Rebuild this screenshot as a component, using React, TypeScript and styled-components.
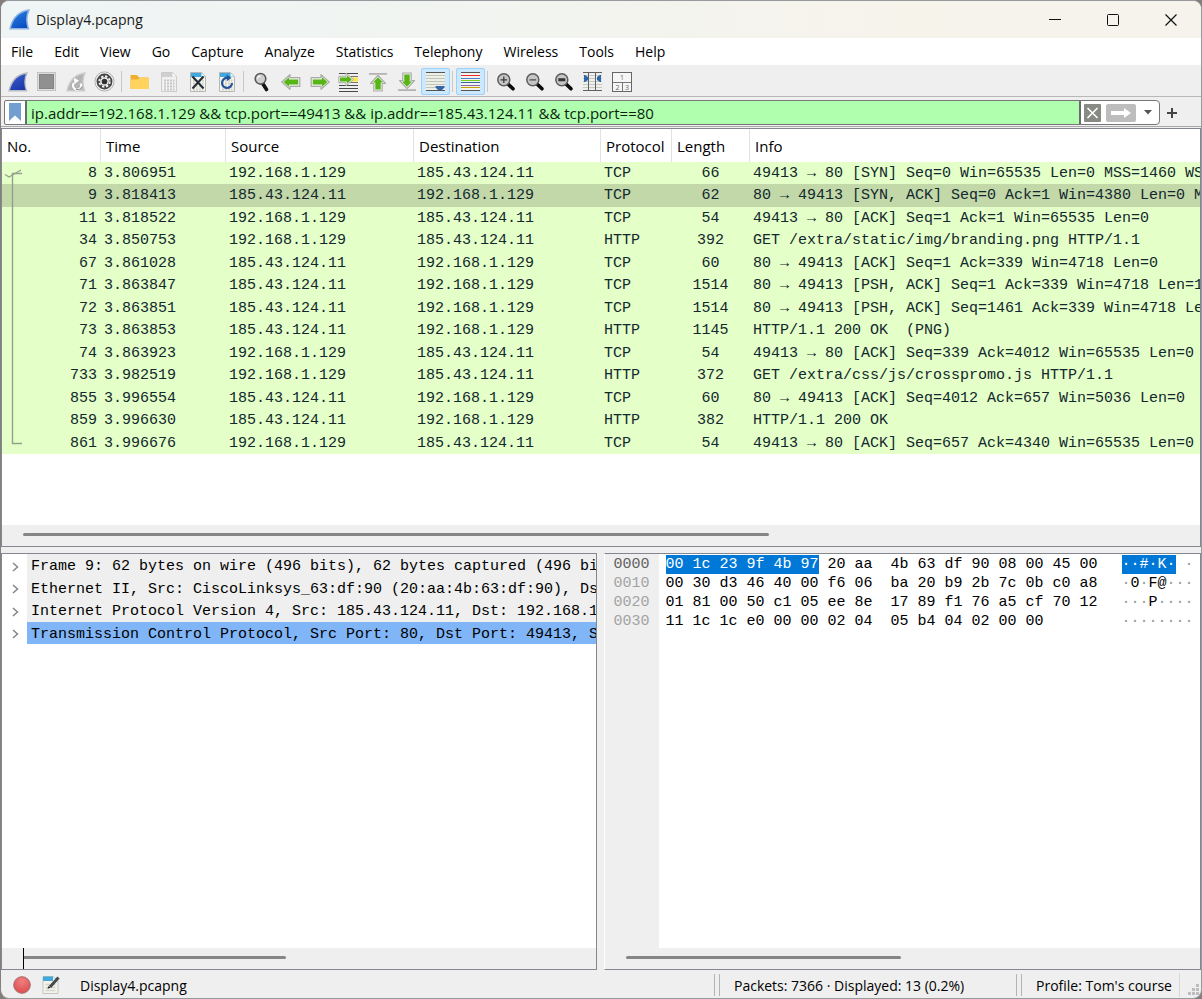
import React, { useState } from 'react';
import styled, { createGlobalStyle, css } from 'styled-components';

const ui = '"Open Sans", "Noto Sans", sans-serif';
const mono = '"Liberation Mono", "DejaVu Sans Mono", monospace';
const chrome = '#efefef';
const frame = '#828790';

const GlobalStyle = createGlobalStyle`
  * { box-sizing: border-box; }
  html, body { margin: 0; padding: 0; background: #857d7a; }
  button, input { font: inherit; color: inherit; margin: 0; }
`;

const Window = styled.div`
  height: 100vh;
  min-height: 600px;
  border: 1px solid #969a9f;
  border-left-color: #857f7e;
  border-radius: 9px;
  overflow: hidden;
  display: flex;
  flex-direction: column;
  background: ${chrome};
  color: #000;
  font: 14px/20px ${ui};
`;

const TitleBar = styled.header`
  flex: none;
  height: 37px;
  padding: 0 1px 0 8px;
  display: flex;
  align-items: center;
  gap: 6px;
  background: linear-gradient(90deg, #eff4f5 0%, #f1f4f0 40%, #f6f3eb 75%, #f5f3eb 100%);
`;

const Title = styled.h1`
  flex: 1;
  margin: 0;
  font: inherit;
  color: #1a1a1a;
`;

const CaptionButtons = styled.div`
  display: flex;
`;

const CaptionButton = styled.button`
  width: 58px;
  height: 37px;
  padding: 0;
  border: 0;
  background: transparent;
  display: flex;
  align-items: center;
  justify-content: center;
`;

const MenuBar = styled.nav`
  flex: none;
  height: 27px;
  display: flex;
  gap: 1px;
  background: #fff;
`;

const MenuItem = styled.button`
  padding: 0 10px;
  border: 0;
  background: transparent;
  line-height: 27px;
  &:hover { background: #e5f3ff; }
`;

const ToolBar = styled.div`
  flex: none;
  height: 32px;
  padding: 2px 0 0 2px;
  display: flex;
  align-items: center;
  border-bottom: 1px solid #b8b8b8;
`;

const ToolButton = styled.button<{ $on?: boolean }>`
  width: 29px;
  height: 27px;
  padding: 0;
  border: 1px solid transparent;
  border-radius: 2px;
  background: transparent;
  display: flex;
  align-items: center;
  justify-content: center;
  ${p => p.$on && css`
    background: #cce8ff;
    border-color: #99d1ff;
  `}
`;

const ToolGap = styled.span`
  width: 6px;
  height: 21px;
  padding-left: 2px;
  display: flex;
  &::before {
    content: '';
    width: 1px;
    background: #c8c8c8;
  }
`;

const FilterBar = styled.form`
  flex: none;
  height: 30px;
  padding: 2px 3px 0;
  display: flex;
  align-items: center;
  gap: 4px;
  border-bottom: 1px solid #a8a8a8;
`;

const FilterBox = styled.div`
  flex: 1;
  min-width: 0;
  height: 25px;
  display: flex;
  align-items: center;
  border: 1px solid #77777b;
  border-radius: 2px 4px 4px 2px;
  background: #fff;
  overflow: hidden;
`;

const FilterInput = styled.input`
  flex: 1;
  min-width: 0;
  height: 100%;
  padding: 1px 4px 0;
  border: 0;
  border-left: 2px solid #6b6b6b;
  border-right: 2px solid #6b6b6b;
  outline: 0;
  background: #afffaf;
  color: #0c1f0c;
  font-size: 15px;
`;

const FilterButton = styled.button<{ $w: number }>`
  width: ${p => p.$w}px;
  height: 100%;
  padding: 0;
  border: 0;
  background: transparent;
  display: flex;
  align-items: center;
  justify-content: center;
`;

const AddButton = styled(FilterButton)`
  margin-right: 18px;
`;

const Main = styled.main`
  flex: 1;
  min-height: 0;
  padding-top: 1px;
  display: flex;
  flex-direction: column;
  gap: 6px;
`;

const Pane = styled.section<{ $grow: number }>`
  flex: ${p => p.$grow} 1 0;
  min-width: 0;
  min-height: 0;
  display: flex;
  flex-direction: column;
  border: 1px solid ${frame};
  background: #fff;
  overflow: hidden;
`;

const BytesPane = styled(Pane)`
  border-left-color: #fff;
`;

const PaneBody = styled.div`
  position: relative;
  flex: 1;
  min-height: 0;
  overflow: hidden;
`;

const Panes = styled.div`
  flex: 1 1 0;
  min-height: 0;
  display: flex;
  gap: 7px;
`;

const Packets = styled.table`
  width: 100%;
  table-layout: fixed;
  border-collapse: separate;
  border-spacing: 0;
`;

const HeadCell = styled.th`
  height: 33px;
  padding: 0 0 0 5px;
  border-right: 1px solid #e2e2e2;
  font-size: 15px;
  font-weight: 400;
  text-align: left;
  &:last-child { border-right: 0; }
`;

const PacketRow = styled.tr<{ $current: boolean }>`
  height: 22px;
  background: ${p => (p.$current ? '#c2d8a9' : '#e4ffc7')};
  &:nth-child(even) { height: 23px; }
`;

const Cell = styled.td<{ $align?: 'right' | 'center' }>`
  padding: 2px 4px 0 3px;
  overflow: hidden;
  white-space: pre;
  vertical-align: top;
  font: 15px/20px ${mono};
  color: #12272e;
  text-align: ${p => p.$align || 'left'};
`;

const Conversation = styled.svg`
  position: absolute;
  left: 0;
  top: 33px;
`;

const ScrollBar = styled.div`
  flex: none;
  height: 21px;
  padding: 8px 12px 0 21px;
  background: ${chrome};
`;

const Thumb = styled.div<{ $size: number }>`
  width: ${p => p.$size}%;
  height: 3px;
  border-radius: 2px;
  background: #858585;
`;

const DetailScroll = styled(ScrollBar)`
  &::before {
    content: '';
    float: left;
    width: 1px;
    height: 21px;
    margin-top: -8px;
    background: #000;
  }
`;

const Tree = styled.ul`
  margin: 0;
  padding: 0;
  list-style: none;
`;

const TreeItem = styled.li`
  height: 23px;
  display: flex;
  &:nth-child(even) { height: 22px; }
`;

const Expander = styled.button`
  flex: none;
  width: 25px;
  padding: 2px 0 0 1px;
  border: 0;
  background: #fff;
  display: flex;
  align-items: center;
  justify-content: center;
`;

const TreeText = styled.span<{ $selected?: boolean }>`
  flex: 1;
  min-width: 0;
  padding-left: 4px;
  overflow: hidden;
  white-space: pre;
  font: 15px/25px ${mono};
  background: ${p => (p.$selected ? '#80b5f7' : chrome)};
`;

const Bytes = styled.div`
  height: 100%;
  display: grid;
  grid-template-columns: 54px 463px 1fr;
  font: 15px/19px ${mono};
  white-space: pre;
`;

const Offsets = styled.div`
  padding: 1px 0 0 9px;
  background: ${chrome};
  color: #a3a3a3;
  & > :first-child { color: #606060; }
`;

const ByteColumn = styled.div`
  padding: 1px 0 0 7px;
`;

const AsciiColumn = styled.div`
  padding-top: 1px;
`;

const Marked = styled.span`
  display: inline-block;
  background: #0078d7;
  color: #fff;
`;

const Dim = styled.span`
  color: #9a9a9a;
`;

const StatusBar = styled.footer`
  flex: none;
  height: 28px;
  padding: 2px 0 0 12px;
  display: flex;
  align-items: center;
`;

const StatusButton = styled.button`
  width: 29px;
  height: 24px;
  padding: 0;
  border: 0;
  background: transparent;
  display: flex;
  align-items: center;
`;

const StatusFile = styled.span`
  flex: 1;
  padding: 2px 0 0 9px;
`;

const StatusText = styled.span<{ $w: number }>`
  width: ${p => p.$w}px;
  padding: 2px 0 0 14px;
  white-space: nowrap;
`;

const Divider = styled.span`
  width: 6px;
  height: 22px;
  border: 1px solid #b4b4b4;
  border-width: 0 1px;
`;

const Grip = styled.div`
  width: 22px;
  height: 24px;
  border-left: 1px solid #d8d8d8;
  display: flex;
  align-items: flex-end;
  justify-content: flex-end;
`;

const Fin = ({ size = 20, top = '#3a66d8', bottom = '#1e36a8', edge = '#b9bcc4' }) => (
  <svg width={size} height={size} viewBox="0 0 20 20" aria-hidden="true">
    <defs>
      <linearGradient id={`fin${top.slice(1)}`} x1="0" y1="0" x2="0.6" y2="1">
        <stop offset="0" stopColor={top} />
        <stop offset="1" stopColor={bottom} />
      </linearGradient>
    </defs>
    <path d="M1 18.800C3 10 8.500 2.500 19 1 16.500 6 16.300 12 18.500 18.800Z" fill={`url(#fin${top.slice(1)})`} stroke={edge} strokeWidth="1.400" />
  </svg>
);

const StopIcon = () => (
  <svg width="19" height="19" viewBox="0 0 19 19">
    <rect x=".5" y=".5" width="18" height="18" fill="#dedede" stroke="#c4c4c4" />
    <rect x="2.500" y="2.500" width="14" height="14" fill="#909090" stroke="#848484" />
  </svg>
);

const RestartIcon = () => (
  <svg width="20" height="20" viewBox="0 0 20 20">
    <path d="M1 18.800C3 10 8.500 2.500 19 1 16.500 6 16.300 12 18.500 18.800Z" fill="#b4b4b4" stroke="#cdcdcd" strokeWidth="1.400" />
    <path d="M8 11a4 4 0 1 0 6.500.500" fill="none" stroke="#fff" strokeWidth="2" />
    <path d="M8 6l5 2.500-4.500 3.500z" fill="#fff" />
    <path d="M10 17.500a5.500 5.500 0 0 0 6-3" fill="none" stroke="#8c8c8c" strokeWidth="1" />
  </svg>
);

const GearIcon = () => (
  <svg width="21" height="21" viewBox="0 0 21 21">
    <circle cx="10.500" cy="10.500" r="9.600" fill="#ededed" stroke="#b0b0b0" />
    <circle cx="10.500" cy="10.500" r="7.900" fill="#454545" />
    <circle cx="10.500" cy="10.500" r="5.200" fill="none" stroke="#f0f0f0" strokeWidth="2" strokeDasharray="2.300 1.780" />
    <circle cx="10.500" cy="10.500" r="3.600" fill="#303030" stroke="#f0f0f0" strokeWidth="1.500" />
  </svg>
);

const FolderIcon = () => (
  <svg width="19" height="16" viewBox="0 0 19 16">
    <path d="M.5 1h6.500l2 2.500h9.500V15H.5z" fill="#eeb02f" />
    <path d="M.5 5.500H8l2-1.800h8.500V15H.5z" fill="#ffd35e" />
  </svg>
);

const FileIcon = ({ kind }: { kind: 'save' | 'close' | 'reload' }) => {
  const live = kind !== 'save';
  return (
    <svg width="18" height="20" viewBox="0 0 18 20">
      <path d="M1.500.500h11l4 4v15h-15z" fill={live ? '#f4f4ec' : '#f1f1f1'} stroke={live ? '#b4b8b4' : '#cbcbcb'} />
      <path d="M2 1h10.500l3.500 4H2z" fill={live ? '#3fa9e0' : '#cfcfcf'} />
      <path d="M12.500 1v3.500h3.500z" fill="#fff" />
      <path d="M4 8.500h10.500M4 11.500h10.500M4 14.500h10.500M4 17.500h10.500" stroke={live ? '#cfcfc8' : '#c6c6c6'} strokeWidth="2" strokeDasharray="2 1" />
      {kind === 'close' && <path d="M3.500 4.500l11 12M14.500 4.500l-11 12" stroke="#222b33" strokeWidth="2" />}
      {kind === 'reload' && (
        <>
          <path d="M14 11a5 5 0 1 1-4.500-5" fill="none" stroke="#24569b" strokeWidth="2.200" />
          <path d="M8.500 2.500l5 3.500-4.500 3z" fill="#24569b" />
        </>
      )}
    </svg>
  );
};

const FindIcon = () => (
  <svg width="18" height="20" viewBox="0 0 18 20">
    <path d="M10 12l3.500 5.500" stroke="#141414" strokeWidth="3.600" strokeLinecap="round" />
    <circle cx="7.500" cy="6.800" r="5.300" fill="#cfcfcf" stroke="#5a5a5a" strokeWidth="1.600" />
    <path d="M4.500 6.500a3 3 0 0 1 3.200-2.500" fill="none" stroke="#fff" strokeWidth="1.200" />
  </svg>
);

const ArrowIcon = ({ right }: { right?: boolean }) => (
  <svg width="20" height="16" viewBox="0 0 20 16">
    <g transform={right ? 'matrix(-1 0 0 1 20 0)' : undefined}>
      <path d="M.800 8l8.200-7.300v3h9.800v8.600H9v3z" fill="#eef2ea" stroke="#a9aca6" strokeWidth="1.200" strokeLinejoin="round" />
      <path d="M2.600 8l5.400-4.800v2.200h9.200v5.200H8v2.200z" fill="#57b516" />
    </g>
  </svg>
);

const GoToIcon = () => (
  <svg width="21" height="20" viewBox="0 0 21 20">
    <path d="M1 1.500h19M1 13.500h19M1 16.500h19M1 19.500h19" stroke="#484848" />
    <path d="M11 4.500h9M11 10.500h9" stroke="#777" />
    <path d="M12 7.500h8" stroke="#ffe54a" strokeWidth="4" />
    <path d="M.800 4.300h7.200V1l7.500 6.500L8 14v-3.300H.800z" fill="#eef2ea" stroke="#a9aca6" />
    <path d="M2 5.400h7V3.300l4.800 4.200L9 11.700V9.600H2z" fill="#57b516" />
  </svg>
);

const EdgeArrowIcon = ({ down }: { down?: boolean }) => (
  <svg width="20" height="20" viewBox="0 0 20 20">
    <g transform={down ? 'matrix(1 0 0 -1 0 20)' : undefined}>
      <path d="M1 1h18v1.800H1z" fill="#b2b2b2" />
      <path d="M10 3.300l7.500 8.200h-3.300v7.500H5.800v-7.500H2.500z" fill="#eef2ea" stroke="#a9aca6" strokeWidth="1.200" strokeLinejoin="round" />
      <path d="M10 5.200l5 5.300h-2.300v7H7.300v-7H5z" fill="#57b516" />
    </g>
  </svg>
);

const AutoScrollIcon = () => (
  <svg width="19" height="19" viewBox="0 0 19 19">
    <path d="M0 0h19v19H0z" fill="#edf0e6" />
    <path d="M0 .500h19M0 18.500h19" stroke="#555" />
    <path d="M0 3.500h19M0 6.500h19M0 9.500h19M0 12.500h19M0 15.500h9" stroke="#bfc4b6" />
    <path d="M9.500 14h9v1.500l-2.500 2.500h-4l-2.500-2.500z" fill="#3465a8" />
  </svg>
);

const stripes: [number, string][] = [
  [0, '#555'], [3, '#ef2929'], [6, '#4d7fd0'], [8, '#73d216'], [10, '#3465a4'], [13, '#8a62a6'], [15, '#c4a000'], [18, '#555'],
];

const ColorizeIcon = () => (
  <svg width="19" height="19" viewBox="0 0 19 19">
    <rect width="19" height="19" fill="#f2f3ee" />
    {stripes.map(([y, color]) => (
      <rect key={y} y={y} width="19" height="1" fill={color} />
    ))}
  </svg>
);

const ZoomIcon = ({ kind }: { kind: 'in' | 'out' | 'reset' }) => (
  <svg width="20" height="20" viewBox="0 0 20 20">
    <path d="M12 12l5 4.800" stroke="#0c0c0c" strokeWidth="3.600" strokeLinecap="round" />
    <circle cx="7.800" cy="7.800" r="6" fill="#c5c5c5" stroke="#5c5c5c" strokeWidth="1.500" />
    {kind === 'in' && <path d="M4.500 7.800h6.600M7.800 4.500v6.600" stroke="#3c3c3c" strokeWidth="1.300" />}
    {kind === 'out' && <path d="M4.500 7.800h6.600" stroke="#4c4c4c" strokeWidth="1.300" />}
    {kind === 'reset' && <path d="M4.300 7.800h7" stroke="#333" strokeWidth="3" />}
  </svg>
);

const ResizeIcon = () => (
  <svg width="19" height="19" viewBox="0 0 19 19">
    <path d="M0 3.500h19M0 6.500h19M0 9.500h19M0 12.500h19M0 15.500h19" stroke="#c6cabd" />
    <path d="M0 .500h19M0 18.500h19M5.500 0v19M12.500 0v19" stroke="#606060" />
    <path d="M1 3h1l3 2v3l-3 2H1zM18 3h-1l-3 2v3l3 2h1z" fill="#2b65ac" />
  </svg>
);

const LayoutIcon = () => (
  <svg width="20" height="20" viewBox="0 0 20 20" fontFamily={ui} fontSize="7" fill="#666" textAnchor="middle">
    <rect x=".500" y=".500" width="19" height="19" fill="#f6f6f6" stroke="#666" />
    <path d="M1 10.500h18M10.500 10.500v9" stroke="#777" />
    <text x="10" y="8">1</text>
    <text x="5.500" y="18">2</text>
    <text x="15" y="18">3</text>
  </svg>
);

const tools: (null | { label: string; icon: React.ReactNode; on?: boolean })[] = [
  { label: 'Start capture', icon: <Fin /> },
  { label: 'Stop capture', icon: <StopIcon /> },
  { label: 'Restart capture', icon: <RestartIcon /> },
  { label: 'Capture options', icon: <GearIcon /> },
  null,
  { label: 'Open', icon: <FolderIcon /> },
  { label: 'Save', icon: <FileIcon kind="save" /> },
  { label: 'Close file', icon: <FileIcon kind="close" /> },
  { label: 'Reload file', icon: <FileIcon kind="reload" /> },
  null,
  { label: 'Find packet', icon: <FindIcon /> },
  { label: 'Previous packet', icon: <ArrowIcon /> },
  { label: 'Next packet', icon: <ArrowIcon right /> },
  { label: 'Go to packet', icon: <GoToIcon /> },
  { label: 'First packet', icon: <EdgeArrowIcon /> },
  { label: 'Last packet', icon: <EdgeArrowIcon down /> },
  { label: 'Auto scroll', icon: <AutoScrollIcon />, on: true },
  null,
  { label: 'Colorize', icon: <ColorizeIcon />, on: true },
  null,
  { label: 'Zoom in', icon: <ZoomIcon kind="in" /> },
  { label: 'Zoom out', icon: <ZoomIcon kind="out" /> },
  { label: 'Normal size', icon: <ZoomIcon kind="reset" /> },
  { label: 'Resize columns', icon: <ResizeIcon /> },
  { label: 'Reset layout', icon: <LayoutIcon /> },
];

const menus = ['File', 'Edit', 'View', 'Go', 'Capture', 'Analyze', 'Statistics', 'Telephony', 'Wireless', 'Tools', 'Help'];

const columns: [string, number?][] = [
  ['No.', 99], ['Time', 125], ['Source', 188], ['Destination', 187], ['Protocol', 71], ['Length', 78], ['Info'],
];

const client = '192.168.1.129';
const server = '185.43.124.11';

const packets: [number, string, boolean, string, number, string][] = [
  [8, '3.806951', true, 'TCP', 66, '49413 → 80 [SYN] Seq=0 Win=65535 Len=0 MSS=1460 WS'],
  [9, '3.818413', false, 'TCP', 62, '80 → 49413 [SYN, ACK] Seq=0 Ack=1 Win=4380 Len=0 M'],
  [11, '3.818522', true, 'TCP', 54, '49413 → 80 [ACK] Seq=1 Ack=1 Win=65535 Len=0'],
  [34, '3.850753', true, 'HTTP', 392, 'GET /extra/static/img/branding.png HTTP/1.1 '],
  [67, '3.861028', false, 'TCP', 60, '80 → 49413 [ACK] Seq=1 Ack=339 Win=4718 Len=0'],
  [71, '3.863847', false, 'TCP', 1514, '80 → 49413 [PSH, ACK] Seq=1 Ack=339 Win=4718 Len=1'],
  [72, '3.863851', false, 'TCP', 1514, '80 → 49413 [PSH, ACK] Seq=1461 Ack=339 Win=4718 Le'],
  [73, '3.863853', false, 'HTTP', 1145, 'HTTP/1.1 200 OK  (PNG)'],
  [74, '3.863923', true, 'TCP', 54, '49413 → 80 [ACK] Seq=339 Ack=4012 Win=65535 Len=0'],
  [733, '3.982519', true, 'HTTP', 372, 'GET /extra/css/js/crosspromo.js HTTP/1.1 '],
  [855, '3.996554', false, 'TCP', 60, '80 → 49413 [ACK] Seq=4012 Ack=657 Win=5036 Len=0'],
  [859, '3.996630', false, 'HTTP', 382, 'HTTP/1.1 200 OK '],
  [861, '3.996676', true, 'TCP', 54, '49413 → 80 [ACK] Seq=657 Ack=4340 Win=65535 Len=0'],
];

const details = [
  'Frame 9: 62 bytes on wire (496 bits), 62 bytes captured (496 bit',
  'Ethernet II, Src: CiscoLinksys_63:df:90 (20:aa:4b:63:df:90), Dst',
  'Internet Protocol Version 4, Src: 185.43.124.11, Dst: 192.168.1.',
  'Transmission Control Protocol, Src Port: 80, Dst Port: 49413, Se',
];

const Ascii = ({ text }: { text: string }) => (
  <>{[...text].map((c, i) => (c === '·' ? <Dim key={i}>{c}</Dim> : c))}</>
);

export default function App() {
  const [filter, setFilter] = useState('ip.addr==192.168.1.129 && tcp.port==49413 && ip.addr==185.43.124.11 && tcp.port==80');
  const [current, setCurrent] = useState(9);

  return (
    <>
      <GlobalStyle />
      <Window>
        <TitleBar>
          <Fin size={21} top="#2f86e6" bottom="#0a4fc0" edge="#8fb4e4" />
          <Title>Display4.pcapng</Title>
          <CaptionButtons>
            <CaptionButton aria-label="Minimize">
              <svg width="12" height="12"><path d="M0 5.500h12" stroke="#111" /></svg>
            </CaptionButton>
            <CaptionButton aria-label="Maximize">
              <svg width="12" height="12"><rect x=".500" y=".500" width="11" height="11" rx="1" fill="none" stroke="#111" /></svg>
            </CaptionButton>
            <CaptionButton aria-label="Close">
              <svg width="12" height="12"><path d="M.500.500l11 11M11.500.500l-11 11" stroke="#111" strokeWidth="1.200" /></svg>
            </CaptionButton>
          </CaptionButtons>
        </TitleBar>

        <MenuBar>
          {menus.map(m => <MenuItem key={m}>{m}</MenuItem>)}
        </MenuBar>

        <ToolBar role="toolbar" aria-label="Main">
          {tools.map((t, i) => t
            ? <ToolButton key={i} $on={t.on} aria-label={t.label} aria-pressed={t.on}>{t.icon}</ToolButton>
            : <ToolGap key={i} />)}
        </ToolBar>

        <FilterBar onSubmit={e => e.preventDefault()}>
          <FilterBox>
            <FilterButton $w={20} type="button" aria-label="Filter bookmarks">
              <svg width="12" height="19"><path d="M0 0h12v18l-6-5.500L0 18z" fill="#729fcf" /></svg>
            </FilterButton>
            <FilterInput aria-label="Display filter" value={filter} onChange={e => setFilter(e.target.value)} spellCheck={false} />
            <FilterButton $w={23} type="button" aria-label="Clear filter">
              <svg width="17" height="18">
                <rect width="17" height="18" rx="1" fill="#888a85" />
                <path d="M3.500 4l10 10M13.500 4l-10 10" stroke="#fff" strokeWidth="1.600" />
              </svg>
            </FilterButton>
            <FilterButton $w={33} type="submit" aria-label="Apply filter">
              <svg width="30" height="18">
                <rect width="30" height="18" rx="2" fill="#bdbdbd" />
                <path d="M5 7h13V4l7 5-7 5v-3H5z" fill="#fff" />
              </svg>
            </FilterButton>
            <FilterButton $w={22} type="button" aria-label="Recent filters">
              <svg width="8" height="5"><path d="M0 0h8L4 4.500z" fill="#555" /></svg>
            </FilterButton>
          </FilterBox>
          <AddButton $w={16} type="button" aria-label="Add filter button">
            <svg width="10" height="10"><path d="M5 0v10M0 5h10" stroke="#444" strokeWidth="2" /></svg>
          </AddButton>
        </FilterBar>

        <Main>
          <Pane $grow={1} aria-label="Packet list">
            <PaneBody>
              <Packets>
                <colgroup>
                  {columns.map(([name, w]) => <col key={name} width={w} />)}
                </colgroup>
                <thead>
                  <tr>{columns.map(([name]) => <HeadCell key={name} scope="col">{name}</HeadCell>)}</tr>
                </thead>
                <tbody>
                  {packets.map(([no, time, outgoing, protocol, length, info]) => (
                    <PacketRow key={no} $current={no === current} onClick={() => setCurrent(no)}>
                      <Cell $align="right">{no}</Cell>
                      <Cell>{time}</Cell>
                      <Cell>{outgoing ? client : server}</Cell>
                      <Cell>{outgoing ? server : client}</Cell>
                      <Cell>{protocol}</Cell>
                      <Cell $align="center">{length}</Cell>
                      <Cell>{info}</Cell>
                    </PacketRow>
                  ))}
                </tbody>
              </Packets>
              <Conversation width="24" height="292" fill="none" stroke="#93a08c" aria-hidden="true">
                <path d="M20 11.500h-9.500V281.500h9.500" strokeWidth="1.400" />
                <path d="M3 12.500l4 2.500 12-7" strokeWidth="1.200" />
              </Conversation>
            </PaneBody>
            <ScrollBar><Thumb $size={64} /></ScrollBar>
          </Pane>

          <Panes>
            <Pane $grow={596} aria-label="Packet details">
              <PaneBody>
                <Tree>
                  {details.map((line, i) => (
                    <TreeItem key={line}>
                      <Expander aria-label="Expand">
                        <svg width="7" height="10"><path d="M1 1l4.500 4L1 9" fill="none" stroke="#858585" strokeWidth="1.500" /></svg>
                      </Expander>
                      <TreeText $selected={i === 3}>{line}</TreeText>
                    </TreeItem>
                  ))}
                </Tree>
              </PaneBody>
              <DetailScroll><Thumb $size={47} /></DetailScroll>
            </Pane>
            <BytesPane $grow={598} aria-label="Packet bytes">
              <PaneBody>
                <Bytes>
                  <Offsets>
                    <div>0000</div><div>0010</div><div>0020</div><div>0030</div>
                  </Offsets>
                  <ByteColumn>
                    <div><Marked>00 1c 23 9f 4b 97</Marked> 20 aa  4b 63 df 90 08 00 45 00</div>
                    <div>00 30 d3 46 40 00 f6 06  ba 20 b9 2b 7c 0b c0 a8</div>
                    <div>01 81 00 50 c1 05 ee 8e  17 89 f1 76 a5 cf 70 12</div>
                    <div>11 1c 1c e0 00 00 02 04  05 b4 04 02 00 00</div>
                  </ByteColumn>
                  <AsciiColumn>
                    <div><Marked>··#·K·</Marked><Ascii text=" ·" /></div>
                    <div><Ascii text="·0·F@···" /></div>
                    <div><Ascii text="···P····" /></div>
                    <div><Ascii text="········" /></div>
                  </AsciiColumn>
                </Bytes>
              </PaneBody>
              <ScrollBar><Thumb $size={49} /></ScrollBar>
            </BytesPane>
          </Panes>
        </Main>

        <StatusBar>
          <StatusButton aria-label="Expert information">
            <svg width="18" height="18">
              <defs>
                <radialGradient id="expert" cx=".5" cy=".25" r=".8">
                  <stop offset="0" stopColor="#f08080" /><stop offset="1" stopColor="#d94b4b" />
                </radialGradient>
              </defs>
              <circle cx="9" cy="9" r="8.300" fill="url(#expert)" stroke="#a86a6a" />
            </svg>
          </StatusButton>
          <StatusButton aria-label="Capture file comment">
            <svg width="19" height="18">
              <path d="M1 .500h10l5 4v13H1z" fill="#f3f4ec" stroke="#c3c6c0" />
              <path d="M1 .500h10v4.500H1z" fill="#45a8dc" />
              <path d="M3.500 8.500h10M3.500 11.500h10M3.500 14.500h10" stroke="#d4d6cc" strokeWidth="1.500" />
              <path d="M16.500 1.500L8 11" stroke="#454a4a" strokeWidth="3" />
              <path d="M5.500 13l1-3 2 1.600z" fill="#222" />
            </svg>
          </StatusButton>
          <StatusFile>Display4.pcapng</StatusFile>
          <Divider />
          <StatusText $w={296}>Packets: 7366 · Displayed: 13 (0.2%)</StatusText>
          <Divider />
          <StatusText $w={157}>Profile: Tom's course</StatusText>
          <Grip>
            <svg width="13" height="13" fill="#bdbdbd" aria-hidden="true">
              <path d="M8 0h3v3H8zM4 4h3v3H4zM8 4h3v3H8zM0 8h3v3H0zM4 8h3v3H4zM8 8h3v3H8z" />
            </svg>
          </Grip>
        </StatusBar>
      </Window>
    </>
  );
}
